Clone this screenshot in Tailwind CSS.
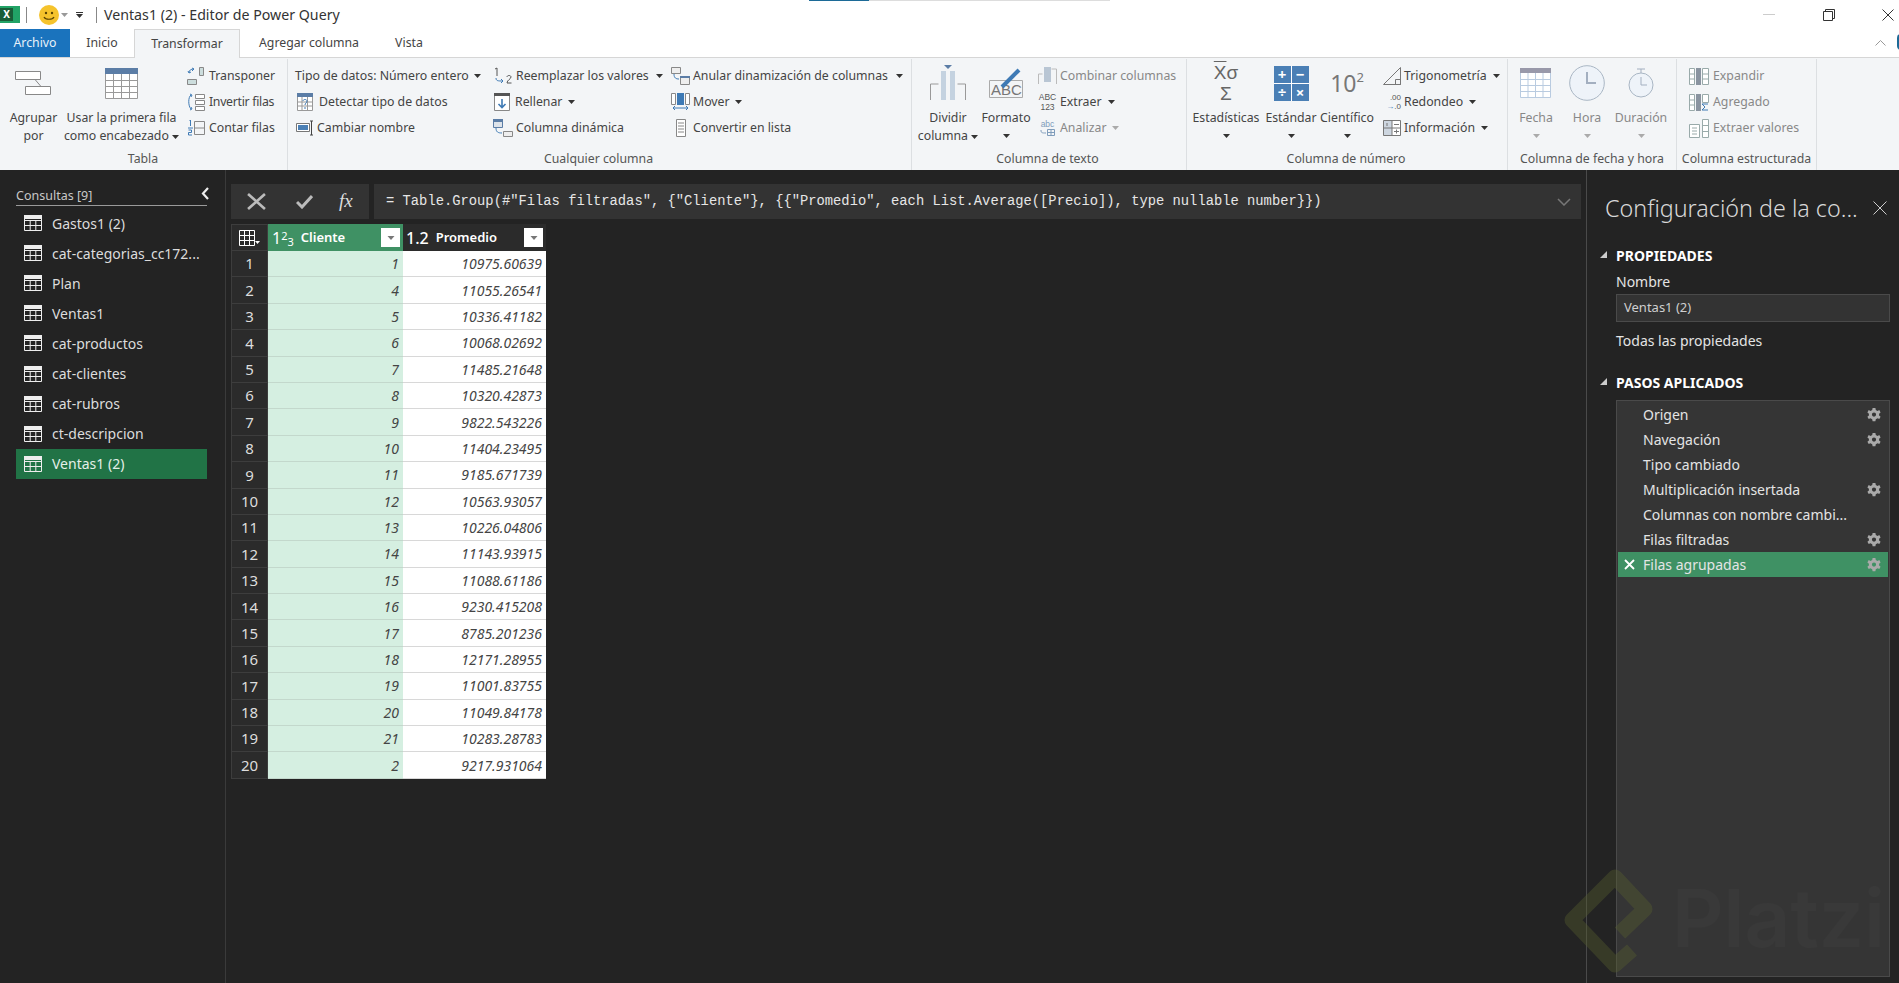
<!DOCTYPE html>
<html lang="es">
<head>
<meta charset="UTF-8">
<title>Ventas1 (2) - Editor de Power Query</title>
<script src="https://cdn.jsdelivr.net/npm/@tailwindcss/browser@4"></script>
</head>
<body class="relative w-[1899px] h-[983px] overflow-hidden bg-white font-['Noto_Sans',sans-serif] text-[12.3px] text-[#444]">
<svg class="hidden">
  <symbol id="tbl" viewBox="0 0 18 16"><path fill="none" stroke="currentColor" d="M.5.500h17v15H.5zM.5 5.500h17M.5 10.500h17M6.200 5.500v10M11.800 5.500v10"/><path fill="currentColor" d="M0 0h18v4H0z"/></symbol>
  <symbol id="gear" viewBox="0 0 14 14"><path fill="#aaa" fill-rule="evenodd" d="M5.600 0h2.800l.4 2 1.700.9 1.800-.8 1.300 2.400-1.500 1.300v1.600l1.500 1.300-1.300 2.400-1.800-.8-1.700.9-.4 2H5.600l-.4-2-1.700-.9-1.800.8L.4 8.700 1.900 7.400V5.800L.4 4.500l1.300-2.400 1.800.8 1.700-.9zM7 4.500a2 2 0 1 0 0 4.200 2 2 0 0 0 0-4.200z"/></symbol>
  <symbol id="car" viewBox="0 0 7 4"><path fill="currentColor" d="M0 0h7L3.500 4z"/></symbol>
</svg>

<!-- title bar -->
<header class="h-[29px] flex items-center relative">
  <div class="w-[20px] h-[17px] bg-[#21a366] flex items-center"><span class="w-[13px] h-[13px] bg-[#185c37] flex items-center justify-center text-white font-bold text-[10px]">X</span></div>
  <div class="w-px h-[16px] bg-[#888] ml-[6px]"></div>
  <svg class="ml-[12px] w-[20px] h-[20px]" viewBox="0 0 20 20"><circle cx="10" cy="10" r="10" fill="#f5c32c"/><circle cx="7" cy="8" r="1.200" fill="#5a4300"/><circle cx="13" cy="8" r="1.200" fill="#5a4300"/><path d="M5 12c1.500 3 8.500 3 10 0" fill="none" stroke="#5a4300" stroke-width="1.200"/></svg>
  <svg class="ml-[2px] w-[7px] h-[4px] text-[#999]"><use href="#car"/></svg>
  <div class="ml-[8px] flex flex-col items-center gap-[1px] text-[#333]"><span class="w-[7px] h-px bg-[#333]"></span><svg class="w-[7px] h-[4px]"><use href="#car"/></svg></div>
  <div class="w-px h-[16px] bg-[#888] ml-[13px]"></div>
  <h1 class="ml-[7px] text-[14.200px] font-normal text-[#333]">Ventas1 (2) - Editor de Power Query</h1>
  <div class="absolute left-[809px] top-0 w-[60px] h-[1px] bg-[#1c6a97]"></div>
  <div class="absolute left-[869px] top-0 w-[241px] h-[1px] bg-[#ddd]"></div>
  <div class="ml-auto flex items-center">
    <span class="w-[12px] h-px bg-[#ccc] mr-[48px]"></span>
    <svg class="w-[12px] h-[12px] mr-[47px]" viewBox="0 0 12 12"><path fill="none" stroke="#333" d="M.5 2.500h9v9h-9zM2.500 2.500v-2h9v9h-2"/></svg>
    <svg class="w-[12px] h-[12px] mr-[5px]" viewBox="0 0 12 12"><path stroke="#333" d="M.5.500l11 11M11.500.500l-11 11"/></svg>
  </div>
</header>

<!-- tabs -->
<nav class="h-[28px] flex items-stretch relative text-[12.300px]">
  <div class="w-[70px] bg-[#1a73bd] text-[#e8f1f9] flex items-center justify-center">Archivo</div>
  <div class="w-[64px] flex items-center justify-center">Inicio</div>
  <div class="w-[106px] border border-b-0 border-[#d6d6d6] bg-[#f3f5f7] flex items-center justify-center relative z-10 h-[29px]">Transformar</div>
  <div class="w-[138px] flex items-center justify-center">Agregar columna</div>
  <div class="w-[62px] flex items-center justify-center">Vista</div>
  <svg class="absolute left-[1875px] top-[11px] w-[11px] h-[6px]" viewBox="0 0 11 6"><path fill="none" stroke="#999" d="M.5 5.500l5-5 5 5"/></svg>
  <div class="absolute left-[1897px] top-[5px] w-[8px] h-[16px] rounded-full bg-[#1c6a97]"></div>
</nav>

<!-- ribbon -->
<section class="h-[113px] flex bg-[#f3f5f7] border-t border-[#d6d6d6]">

  <div class="w-[288px] h-full flex flex-col">
    <div class="h-[90px] pt-[4px] flex border-r border-[#dcdfe2] mt-[1px]">
      <div class="w-[60px] pl-[7px] flex flex-col items-center">
        <div class="h-[46px] flex items-center"><svg class="w-[38px] h-[26px] mt-[-4px]" viewBox="0 0 38 26"><path fill="#fff" stroke="#888" d="M.5.500h25v8H.5zM10.500 15.500h25v8h-25z"/><path stroke="#888" d="M20 8.500l6 7"/></svg></div>
        <span class="leading-[18px] text-center">Agrupar<br>por</span>
      </div>
      <div class="w-[123px] flex flex-col items-center">
        <div class="h-[46px] flex items-center"><svg class="w-[33px] h-[31px] mt-[-6px]" viewBox="0 0 33 31"><path fill="#fff" stroke="#999" d="M.5.500h32v30H.5zM.5 12.500h32M.5 18.500h32M.5 24.500h32M8.500 6v25M16.500 6v25M24.500 6v25"/><path fill="#5b7da6" d="M0 0h33v6H0z"/></svg></div>
        <span class="leading-[18px] text-center whitespace-nowrap">Usar la primera fila<br>como encabezado <svg class="inline w-[7px] h-[4px] align-middle text-[#333]"><use href="#car"/></svg></span>
      </div>
      <div class="pl-[4px]">
        <div class="h-[26px] flex items-center gap-[4px]"><svg class="w-[18px] h-[18px]" viewBox="0 0 18 18"><path fill="none" stroke="#3e7ab5" d="M2 6c0-3 2-4 5-4M5 1l2 1-2 2M1 4l1 2 2-1"/><path fill="#cdd" stroke="#888" d="M12.500.500h4v8h-4zM.5 12.500h9v5h-9z"/></svg><span>Transponer</span></div>
        <div class="h-[26px] flex items-center gap-[4px]"><svg class="w-[18px] h-[18px]" viewBox="0 0 18 18"><path fill="none" stroke="#3e7ab5" d="M4 2C1 4 1 13 4 16M3 1l2 1-1 2M3 17l2-1-1-2"/><path fill="#fff" stroke="#888" d="M8.500 1.500h9v4h-9zM8.500 7.500h9v4h-9zM8.500 13.500h9v4h-9z"/></svg><span class="tracking-[-0.3px]">Invertir filas</span></div>
        <div class="h-[26px] flex items-center gap-[4px]"><svg class="w-[18px] h-[18px]" viewBox="0 0 18 18"><path fill="none" stroke="#888" d="M7.500 2.500h10v13h-10zM7.500 9h10"/><path stroke="#3e7ab5" d="M1 9h5"/><path fill="none" stroke="#3e7ab5" d="M2.500 2l1-1v6M1.500 11h3v2.500h-3v2.500h3.500"/></svg><span>Contar filas</span></div>
      </div>
    </div>
    <div class="h-[22px] leading-[22px] text-center text-[#555] border-r border-[#dcdfe2] pr-[1px]">Tabla</div>
  </div>

  <div class="w-[624px] h-full flex flex-col">
    <div class="h-[90px] pt-[4px] mt-[1px] flex border-r border-[#dcdfe2]">
      <div class="w-[205px] pl-[7px]">
        <div class="h-[26px] flex items-center whitespace-nowrap">Tipo de datos: Número entero <svg class="ml-[5px] w-[7px] h-[4px] text-[#333]"><use href="#car"/></svg></div>
        <div class="h-[26px] flex items-center gap-[6px]"><svg class="ml-[2px] w-[16px] h-[18px]" viewBox="0 0 16 18"><path fill="#fff" stroke="#999" d="M.5.500h15v17H.5zM.5 9h15M.5 13h15M5 4v14M10.500 4v14"/><path fill="#5b7da6" d="M0 0h16v4H0z"/><path fill="none" stroke="#3e7ab5" d="M6 8c0-2 4-2 4 0s-2 2-2 4m0 2v2"/></svg><span>Detectar tipo de datos</span></div>
        <div class="h-[26px] flex items-center gap-[2px]"><svg class="ml-[1px] w-[19px] h-[16px]" viewBox="0 0 19 16"><path fill="#fff" stroke="#777" d="M.5 3.500h13v8H.5z"/><path fill="#4a7fb5" d="M2 5h10v5H2z"/><path stroke="#444" fill="none" d="M14 1h3m-1.500 0v14M14 15h3"/></svg><span>Cambiar nombre</span></div>
      </div>
      <div class="w-[178px]">
        <div class="h-[26px] flex items-center gap-[3px] whitespace-nowrap"><svg class="w-[20px] h-[18px]" viewBox="0 0 20 18"><path fill="none" stroke="#555" d="M2 2l2-1v8M14 10c0-2 4-2 4 0s-4 3-4 6h4.500"/><path fill="none" stroke="#3e7ab5" d="M3 11c0 3 2 3 7 3m-2-2l2 2-2 2"/></svg><span>Reemplazar los valores</span><svg class="ml-[4px] w-[7px] h-[4px] text-[#333]"><use href="#car"/></svg></div>
        <div class="h-[26px] flex items-center gap-[5px]"><svg class="ml-[1px] w-[16px] h-[18px]" viewBox="0 0 16 18"><path fill="#fff" stroke="#888" d="M.5.500h15v17H.5z"/><path fill="#555" d="M0 0h16v3H0z"/><path fill="none" stroke="#3e7ab5" stroke-width="1.600" d="M8 6v9M4.500 11L8 14.500 11.500 11"/></svg><span>Rellenar</span><svg class="ml-[1px] w-[7px] h-[4px] text-[#333]"><use href="#car"/></svg></div>
        <div class="h-[26px] flex items-center gap-[3px]"><svg class="w-[20px] h-[18px]" viewBox="0 0 20 18"><path fill="#dde3ea" stroke="#5b7da6" d="M.5.500h9v8h-9z"/><path fill="#5b7da6" d="M0 0h10v3H0z"/><path fill="#eee" stroke="#888" d="M10.500 12.500h9v5h-9z"/><path fill="none" stroke="#3e7ab5" d="M3 9c0 4 2 5 6 5"/></svg><span>Columna dinámica</span></div>
      </div>
      <div class="flex-1">
        <div class="h-[26px] flex items-center gap-[3px] whitespace-nowrap"><svg class="w-[19px] h-[18px]" viewBox="0 0 19 18"><path fill="#eee" stroke="#888" d="M.5.500h9v6h-9zM9.500 10.500h9v7h-9z"/><path fill="#5b7da6" d="M9 9h10v2H9z"/><path fill="none" stroke="#3e7ab5" d="M3 7c0 4 2 5 5 5"/></svg><span>Anular dinamización de columnas</span><svg class="ml-[5px] w-[7px] h-[4px] text-[#333]"><use href="#car"/></svg></div>
        <div class="h-[26px] flex items-center gap-[3px]"><svg class="w-[19px] h-[18px]" viewBox="0 0 19 18"><path fill="#fff" stroke="#888" d="M.5.500h4v11h-4zM14.500.500h4v11h-4z"/><path fill="#3e7ab5" d="M6 0h7v12H6z"/><path fill="none" stroke="#3e7ab5" d="M2 15h15M4 13l-2 2 2 2M15 13l2 2-2 2"/></svg><span>Mover</span><svg class="ml-[2px] w-[7px] h-[4px] text-[#333]"><use href="#car"/></svg></div>
        <div class="h-[26px] flex items-center gap-[7px]"><svg class="ml-[5px] w-[10px] h-[18px]" viewBox="0 0 10 18"><path fill="#fff" stroke="#888" d="M.5.500h9v17h-9zM2 4h6M2 7h6M2 10h6M2 13h6"/></svg><span>Convertir en lista</span></div>
      </div>
    </div>
    <div class="h-[22px] leading-[22px] text-center text-[#555] border-r border-[#dcdfe2] pr-[2px]">Cualquier columna</div>
  </div>

  <div class="w-[275px] h-full flex flex-col">
    <div class="h-[90px] pt-[4px] mt-[1px] flex border-r border-[#dcdfe2]">
      <div class="w-[72px] flex flex-col items-center">
        <div class="h-[46px] flex items-center"><svg class="w-[36px] h-[36px] mt-[-6px]" viewBox="0 0 36 36"><path fill="none" stroke="#999" d="M.5 35V19h8M35.500 35V19h-8"/><path fill="#c4d2e0" d="M11 6h5v29h-5zM20 6h5v29h-5z"/><path fill="#5b7da6" d="M14 0h8l-4 4z"/></svg></div>
        <span class="leading-[18px] text-center whitespace-nowrap">Dividir<br>columna <svg class="inline w-[7px] h-[4px] align-middle text-[#333]"><use href="#car"/></svg></span>
      </div>
      <div class="w-[44px] flex flex-col items-center">
        <div class="h-[46px] flex items-center"><svg class="w-[36px] h-[32px] mt-[-6px]" viewBox="0 0 36 32"><path fill="none" stroke="#aaa" d="M1.500 13.500h33v17h-33z"/><text x="3" y="28" font-size="15" fill="#777" font-family="Liberation Sans">ABC</text><path stroke="#3e7ab5" stroke-width="4" d="M14 20L31 3"/></svg></div>
        <span class="leading-[18px] text-center">Formato</span>
        <svg class="mt-[7px] w-[7px] h-[4px] text-[#333]"><use href="#car"/></svg>
      </div>
      <div class="flex-1 pl-[10px] whitespace-nowrap">
        <div class="h-[26px] flex items-center gap-[3px] text-[#888]"><svg class="w-[19px] h-[18px]" viewBox="0 0 19 18"><path fill="none" stroke="#bbb" d="M.5 17V7h4M18.500 17V2h-5"/><path fill="#b9c6d4" d="M6 0h7v15H6z"/></svg><span>Combinar columnas</span></div>
        <div class="h-[26px] flex items-center gap-[3px]"><span class="w-[19px] text-[8.500px] leading-[10px] text-[#555] text-center font-['Liberation_Sans']">ABC<br>123</span><span>Extraer</span><svg class="ml-[3px] w-[7px] h-[4px] text-[#333]"><use href="#car"/></svg></div>
        <div class="h-[26px] flex items-center gap-[3px] text-[#888]"><span class="w-[19px] flex flex-col items-center text-[8.500px] leading-[9px] text-[#7f9cbb] font-['Liberation_Sans']">abc<svg class="w-[15px] h-[7px]" viewBox="0 0 15 7"><path fill="none" stroke="#7f9cbb" d="M1 1c0 3 1 3 5 3M7.500.5h7v6h-7zM7.500 3.500h7M11 .5v6"/></svg></span><span>Analizar</span><svg class="ml-[3px] w-[7px] h-[4px] text-[#aaa]"><use href="#car"/></svg></div>
      </div>
    </div>
    <div class="h-[22px] leading-[22px] text-center text-[#555] border-r border-[#dcdfe2] pr-[3px]">Columna de texto</div>
  </div>

  <div class="w-[321px] h-full flex flex-col">
    <div class="h-[90px] pt-[4px] mt-[1px] flex border-r border-[#dcdfe2]">
      <div class="w-[78px] flex flex-col items-center">
        <div class="h-[46px] flex items-center"><span class="mt-[-6px] text-[19px] leading-[21px] text-center text-[#666] font-['Liberation_Sans']"><span class="overline">X</span>σ<br>Σ</span></div>
        <span class="leading-[18px] whitespace-nowrap">Estadísticas</span>
        <svg class="mt-[7px] w-[7px] h-[4px] text-[#333]"><use href="#car"/></svg>
      </div>
      <div class="w-[52px] flex flex-col items-center">
        <div class="h-[46px] flex items-center"><div class="mt-[-6px] w-[35px] h-[35px] grid grid-cols-2 gap-[1px] bg-white text-white text-[15px] leading-[17px] font-bold text-center"><span class="bg-[#4a7fb5]">+</span><span class="bg-[#4a7fb5]">−</span><span class="bg-[#4a7fb5]">÷</span><span class="bg-[#4a7fb5]">×</span></div></div>
        <span class="leading-[18px]">Estándar</span>
        <svg class="mt-[7px] w-[7px] h-[4px] text-[#333]"><use href="#car"/></svg>
      </div>
      <div class="w-[60px] flex flex-col items-center">
        <div class="h-[46px] flex items-center"><span class="mt-[-6px] text-[23px] text-[#777]">10<sup class="text-[13px] top-[-10px] relative">2</sup></span></div>
        <span class="leading-[18px]">Científico</span>
        <svg class="mt-[7px] w-[7px] h-[4px] text-[#333]"><use href="#car"/></svg>
      </div>
      <div class="flex-1 pl-[6px] whitespace-nowrap">
        <div class="h-[26px] flex items-center gap-[3px]"><svg class="w-[18px] h-[18px]" viewBox="0 0 18 18"><path fill="none" stroke="#777" d="M.5 17.500L17.500.5v17zM12.500 12.500h5v5h-5z"/></svg><span>Trigonometría</span><svg class="ml-[3px] w-[7px] h-[4px] text-[#333]"><use href="#car"/></svg></div>
        <div class="h-[26px] flex items-center gap-[3px]"><span class="w-[18px] text-[8px] leading-[9px] text-[#555] text-right whitespace-nowrap font-['Liberation_Sans']">.00<br><span class="text-[#3e7ab5]">→</span>.0</span><span>Redondeo</span><svg class="ml-[3px] w-[7px] h-[4px] text-[#333]"><use href="#car"/></svg></div>
        <div class="h-[26px] flex items-center gap-[3px]"><svg class="w-[18px] h-[18px]" viewBox="0 0 18 18"><path fill="#cdd6e0" stroke="#777" d="M.5 1.500h17v15H.5z"/><path fill="#fff" d="M9 2h8v14H9z"/><path stroke="#777" d="M9 1.500v15M.5 9h17M4 4v3M11 5.500h5M11 12.500h5M13.500 10.500v4"/></svg><span>Información</span><svg class="ml-[3px] w-[7px] h-[4px] text-[#333]"><use href="#car"/></svg></div>
      </div>
    </div>
    <div class="h-[22px] leading-[22px] text-center text-[#555] border-r border-[#dcdfe2] pr-[2px]">Columna de número</div>
  </div>

  <div class="w-[169px] h-full flex flex-col">
    <div class="h-[90px] pt-[4px] mt-[1px] flex border-r border-[#dcdfe2] text-[#888]">
      <div class="w-[56px] flex flex-col items-center">
        <div class="h-[46px] flex items-center"><svg class="w-[32px] h-[30px] mt-[-6px]" viewBox="0 0 32 30"><path fill="#fff" stroke="#b9cbe0" d="M.5.500h30v29H.5zM.5 11.500h30M.5 17.500h30M.5 23.500h30M8 5v25M15.500 5v25M23 5v25"/><path fill="#99a" d="M0 0h31v5H0z"/></svg></div>
        <span class="leading-[18px]">Fecha</span>
        <svg class="mt-[7px] w-[7px] h-[4px] text-[#aaa]"><use href="#car"/></svg>
      </div>
      <div class="w-[46px] flex flex-col items-center">
        <div class="h-[46px] flex items-center"><svg class="w-[36px] h-[36px] mt-[-6px]" viewBox="0 0 36 36"><circle cx="18" cy="18" r="17.300" fill="#eef3f9" stroke="#a9b6c4"/><path fill="none" stroke="#a3afc0" stroke-width="2" d="M18 7v11h9"/></svg></div>
        <span class="leading-[18px]">Hora</span>
        <svg class="mt-[7px] w-[7px] h-[4px] text-[#aaa]"><use href="#car"/></svg>
      </div>
      <div class="w-[62px] flex flex-col items-center">
        <div class="h-[46px] flex items-center"><svg class="w-[26px] h-[30px] mt-[-6px]" viewBox="0 0 26 30"><circle cx="13" cy="17" r="12" fill="#eef3f9" stroke="#a9b6c4"/><path fill="none" stroke="#a3afc0" d="M13 9v8h6M9 1h8M13 1v4"/></svg></div>
        <span class="leading-[18px]">Duración</span>
        <svg class="mt-[7px] w-[7px] h-[4px] text-[#aaa]"><use href="#car"/></svg>
      </div>
    </div>
    <div class="h-[22px] leading-[22px] text-center text-[#555] border-r border-[#dcdfe2]">Columna de fecha y hora</div>
  </div>

  <div class="w-[140px] h-full flex flex-col">
    <div class="h-[90px] pt-[4px] mt-[1px] pl-[12px] border-r border-[#dcdfe2] text-[#888] whitespace-nowrap">
      <div class="h-[26px] flex items-center gap-[4px]"><svg class="w-[20px] h-[17px]" viewBox="0 0 20 17"><path fill="#fff" stroke="#9aa" d="M.5.500h5v16h-5zM13.500.500h6v16h-6zM.5 6h5M.5 11h5M13.500 6h6M13.500 11h6"/><path fill="#8a94a0" d="M7 0h5v17H7z"/></svg><span>Expandir</span></div>
      <div class="h-[26px] flex items-center gap-[4px]"><svg class="w-[20px] h-[17px]" viewBox="0 0 20 17"><path fill="#fff" stroke="#9aa" d="M.5.500h5v16h-5zM13.500.500h6v8h-6zM.5 6h5M.5 11h5"/><path fill="#8a94a0" d="M7 0h5v17H7z"/><path fill="none" stroke="#3e7ab5" d="M19 10h-6l3 3-3 3h6"/></svg><span>Agregado</span></div>
      <div class="h-[26px] flex items-center gap-[4px]"><svg class="w-[20px] h-[19px]" viewBox="0 0 20 19"><path fill="#fff" stroke="#9aa" d="M.5 5.500h10v13H.5zM13.500.500h6v18h-6zM3 9h5M3 12h5M3 15h5M13.500 6.500h6M13.500 12.500h6"/></svg><span>Extraer valores</span></div>
    </div>
    <div class="h-[22px] leading-[22px] text-center text-[#555] border-r border-[#dcdfe2] whitespace-nowrap">Columna estructurada</div>
  </div>
  <div class="flex-1"></div>
</section>

<!-- main area -->
<main class="h-[813px] flex bg-[#232323]">
  <aside class="w-[226px] shrink-0 border-r border-[#3a3a3a] pl-[16px] pr-[18px] pt-[18px] text-[14px] text-[#dcdcdc]">
    <div class="flex items-center h-[18px] border-b border-[#9a9a9a] relative text-[12.500px] text-[#c8c8c8]">Consultas [9]
      <svg class="absolute right-[-2px] top-[-1px] w-[8px] h-[13px]" viewBox="0 0 8 13"><path fill="none" stroke="#eee" stroke-width="2.200" d="M7 1L2 6.500 7 12"/></svg>
    </div>
    <ul class="mt-[2px]">
      <li class="h-[30.100px] flex items-center pl-[8px] gap-[10px]"><svg class="w-[18px] h-[16px] text-[#eee]"><use href="#tbl"/></svg>Gastos1 (2)</li>
      <li class="h-[30.100px] flex items-center pl-[8px] gap-[10px]"><svg class="w-[18px] h-[16px] text-[#eee]"><use href="#tbl"/></svg>cat-categorias_cc172...</li>
      <li class="h-[30.100px] flex items-center pl-[8px] gap-[10px]"><svg class="w-[18px] h-[16px] text-[#eee]"><use href="#tbl"/></svg>Plan</li>
      <li class="h-[30.100px] flex items-center pl-[8px] gap-[10px]"><svg class="w-[18px] h-[16px] text-[#eee]"><use href="#tbl"/></svg>Ventas1</li>
      <li class="h-[30.100px] flex items-center pl-[8px] gap-[10px]"><svg class="w-[18px] h-[16px] text-[#eee]"><use href="#tbl"/></svg>cat-productos</li>
      <li class="h-[30.100px] flex items-center pl-[8px] gap-[10px]"><svg class="w-[18px] h-[16px] text-[#eee]"><use href="#tbl"/></svg>cat-clientes</li>
      <li class="h-[30.100px] flex items-center pl-[8px] gap-[10px]"><svg class="w-[18px] h-[16px] text-[#eee]"><use href="#tbl"/></svg>cat-rubros</li>
      <li class="h-[30.100px] flex items-center pl-[8px] gap-[10px]"><svg class="w-[18px] h-[16px] text-[#eee]"><use href="#tbl"/></svg>ct-descripcion</li>
      <li class="h-[30.100px] flex items-center pl-[8px] gap-[10px] bg-[#217346] text-[#e4efe8]"><svg class="w-[18px] h-[16px] text-[#eee]"><use href="#tbl"/></svg>Ventas1 (2)</li>
    </ul>
  </aside>

  <div class="flex-1 pl-[5px] pr-[5px] pt-[14px]">
    <div class="flex h-[35px] gap-[5px]">
      <div class="w-[138px] bg-[#333] flex items-center text-[#ccc]">
        <svg class="ml-[16px] w-[19px] h-[17px]" viewBox="0 0 18 16"><path stroke="#bbb" stroke-width="2.500" d="M1 1l16 14M17 1L1 15"/></svg>
        <svg class="ml-[30px] w-[17px] h-[14px]" viewBox="0 0 17 14"><path fill="none" stroke="#bbb" stroke-width="3" d="M1 7l5 5L16 1"/></svg>
        <span class="ml-[26px] text-[19px] italic font-['Liberation_Serif'] text-[#ddd]">fx</span>
      </div>
      <div class="flex-1 bg-[#333] flex items-center pl-[12px] pr-[10px] pt-[1px] font-['Liberation_Mono'] text-[13.800px] text-[#e6e6e6] whitespace-nowrap">
        <span>= Table.Group(#"Filas filtradas", {"Cliente"}, {{"Promedio", each List.Average([Precio]), type nullable number}})</span>
        <svg class="ml-auto w-[14px] h-[8px]" viewBox="0 0 14 8"><path fill="none" stroke="#777" stroke-width="1.500" d="M1 1l6 6 6-6"/></svg>
      </div>
    </div>

    <div class="mt-[5px] w-[315px] grid grid-cols-[37px_135px_143px] grid-rows-[27px_repeat(20,26.4px)] text-[14px] text-[#444] italic">
      <div class="bg-[#2b2b2b] border border-[#3d3d3d] flex items-center justify-center not-italic"><svg class="w-[21px] h-[16px] text-white" viewBox="0 0 21 16"><path fill="none" stroke="currentColor" d="M.5.500h15v15H.5zM.5 5.500h15M.5 10.500h15M5.500.5v15M10.500.5v15"/><path fill="currentColor" d="M16 11h5l-2.500 3z"/></svg></div>
      <div class="bg-[#3f9164] flex items-center not-italic text-white font-semibold text-[13px] pl-[4px]"><span class="font-normal text-[16px] mr-[7px]">1<sup class="text-[11px] -top-[4px] relative">2</sup><sub class="text-[11px] top-[2px] relative">3</sub></span>Cliente<span class="ml-auto mr-[3px] w-[19px] h-[19px] bg-white flex items-center justify-center"><svg class="w-[8px] h-[4px] text-[#777]"><use href="#car"/></svg></span></div>
      <div class="bg-[#2b2b2b] flex items-center not-italic text-white font-semibold text-[13px] pl-[3px]"><span class="font-medium text-[16px] mr-[7px]">1.2</span>Promedio<span class="ml-auto mr-[3px] w-[19px] h-[19px] bg-white flex items-center justify-center"><svg class="w-[8px] h-[4px] text-[#777]"><use href="#car"/></svg></span></div>

      <div class="bg-[#2b2b2b] border-b border-x border-[#3d3d3d] text-[15px] not-italic text-[#ddd] flex items-center justify-center">1</div><div class="bg-[#d5efe1] border-b border-[#c3d8cc] flex items-center justify-end pr-[4px]">1</div><div class="bg-white border-b border-[#d8d8d8] flex items-center justify-end pr-[4px]">10975.60639</div>
      <div class="bg-[#2b2b2b] border-b border-x border-[#3d3d3d] text-[15px] not-italic text-[#ddd] flex items-center justify-center">2</div><div class="bg-[#d5efe1] border-b border-[#c3d8cc] flex items-center justify-end pr-[4px]">4</div><div class="bg-white border-b border-[#d8d8d8] flex items-center justify-end pr-[4px]">11055.26541</div>
      <div class="bg-[#2b2b2b] border-b border-x border-[#3d3d3d] text-[15px] not-italic text-[#ddd] flex items-center justify-center">3</div><div class="bg-[#d5efe1] border-b border-[#c3d8cc] flex items-center justify-end pr-[4px]">5</div><div class="bg-white border-b border-[#d8d8d8] flex items-center justify-end pr-[4px]">10336.41182</div>
      <div class="bg-[#2b2b2b] border-b border-x border-[#3d3d3d] text-[15px] not-italic text-[#ddd] flex items-center justify-center">4</div><div class="bg-[#d5efe1] border-b border-[#c3d8cc] flex items-center justify-end pr-[4px]">6</div><div class="bg-white border-b border-[#d8d8d8] flex items-center justify-end pr-[4px]">10068.02692</div>
      <div class="bg-[#2b2b2b] border-b border-x border-[#3d3d3d] text-[15px] not-italic text-[#ddd] flex items-center justify-center">5</div><div class="bg-[#d5efe1] border-b border-[#c3d8cc] flex items-center justify-end pr-[4px]">7</div><div class="bg-white border-b border-[#d8d8d8] flex items-center justify-end pr-[4px]">11485.21648</div>
      <div class="bg-[#2b2b2b] border-b border-x border-[#3d3d3d] text-[15px] not-italic text-[#ddd] flex items-center justify-center">6</div><div class="bg-[#d5efe1] border-b border-[#c3d8cc] flex items-center justify-end pr-[4px]">8</div><div class="bg-white border-b border-[#d8d8d8] flex items-center justify-end pr-[4px]">10320.42873</div>
      <div class="bg-[#2b2b2b] border-b border-x border-[#3d3d3d] text-[15px] not-italic text-[#ddd] flex items-center justify-center">7</div><div class="bg-[#d5efe1] border-b border-[#c3d8cc] flex items-center justify-end pr-[4px]">9</div><div class="bg-white border-b border-[#d8d8d8] flex items-center justify-end pr-[4px]">9822.543226</div>
      <div class="bg-[#2b2b2b] border-b border-x border-[#3d3d3d] text-[15px] not-italic text-[#ddd] flex items-center justify-center">8</div><div class="bg-[#d5efe1] border-b border-[#c3d8cc] flex items-center justify-end pr-[4px]">10</div><div class="bg-white border-b border-[#d8d8d8] flex items-center justify-end pr-[4px]">11404.23495</div>
      <div class="bg-[#2b2b2b] border-b border-x border-[#3d3d3d] text-[15px] not-italic text-[#ddd] flex items-center justify-center">9</div><div class="bg-[#d5efe1] border-b border-[#c3d8cc] flex items-center justify-end pr-[4px]">11</div><div class="bg-white border-b border-[#d8d8d8] flex items-center justify-end pr-[4px]">9185.671739</div>
      <div class="bg-[#2b2b2b] border-b border-x border-[#3d3d3d] text-[15px] not-italic text-[#ddd] flex items-center justify-center">10</div><div class="bg-[#d5efe1] border-b border-[#c3d8cc] flex items-center justify-end pr-[4px]">12</div><div class="bg-white border-b border-[#d8d8d8] flex items-center justify-end pr-[4px]">10563.93057</div>
      <div class="bg-[#2b2b2b] border-b border-x border-[#3d3d3d] text-[15px] not-italic text-[#ddd] flex items-center justify-center">11</div><div class="bg-[#d5efe1] border-b border-[#c3d8cc] flex items-center justify-end pr-[4px]">13</div><div class="bg-white border-b border-[#d8d8d8] flex items-center justify-end pr-[4px]">10226.04806</div>
      <div class="bg-[#2b2b2b] border-b border-x border-[#3d3d3d] text-[15px] not-italic text-[#ddd] flex items-center justify-center">12</div><div class="bg-[#d5efe1] border-b border-[#c3d8cc] flex items-center justify-end pr-[4px]">14</div><div class="bg-white border-b border-[#d8d8d8] flex items-center justify-end pr-[4px]">11143.93915</div>
      <div class="bg-[#2b2b2b] border-b border-x border-[#3d3d3d] text-[15px] not-italic text-[#ddd] flex items-center justify-center">13</div><div class="bg-[#d5efe1] border-b border-[#c3d8cc] flex items-center justify-end pr-[4px]">15</div><div class="bg-white border-b border-[#d8d8d8] flex items-center justify-end pr-[4px]">11088.61186</div>
      <div class="bg-[#2b2b2b] border-b border-x border-[#3d3d3d] text-[15px] not-italic text-[#ddd] flex items-center justify-center">14</div><div class="bg-[#d5efe1] border-b border-[#c3d8cc] flex items-center justify-end pr-[4px]">16</div><div class="bg-white border-b border-[#d8d8d8] flex items-center justify-end pr-[4px]">9230.415208</div>
      <div class="bg-[#2b2b2b] border-b border-x border-[#3d3d3d] text-[15px] not-italic text-[#ddd] flex items-center justify-center">15</div><div class="bg-[#d5efe1] border-b border-[#c3d8cc] flex items-center justify-end pr-[4px]">17</div><div class="bg-white border-b border-[#d8d8d8] flex items-center justify-end pr-[4px]">8785.201236</div>
      <div class="bg-[#2b2b2b] border-b border-x border-[#3d3d3d] text-[15px] not-italic text-[#ddd] flex items-center justify-center">16</div><div class="bg-[#d5efe1] border-b border-[#c3d8cc] flex items-center justify-end pr-[4px]">18</div><div class="bg-white border-b border-[#d8d8d8] flex items-center justify-end pr-[4px]">12171.28955</div>
      <div class="bg-[#2b2b2b] border-b border-x border-[#3d3d3d] text-[15px] not-italic text-[#ddd] flex items-center justify-center">17</div><div class="bg-[#d5efe1] border-b border-[#c3d8cc] flex items-center justify-end pr-[4px]">19</div><div class="bg-white border-b border-[#d8d8d8] flex items-center justify-end pr-[4px]">11001.83755</div>
      <div class="bg-[#2b2b2b] border-b border-x border-[#3d3d3d] text-[15px] not-italic text-[#ddd] flex items-center justify-center">18</div><div class="bg-[#d5efe1] border-b border-[#c3d8cc] flex items-center justify-end pr-[4px]">20</div><div class="bg-white border-b border-[#d8d8d8] flex items-center justify-end pr-[4px]">11049.84178</div>
      <div class="bg-[#2b2b2b] border-b border-x border-[#3d3d3d] text-[15px] not-italic text-[#ddd] flex items-center justify-center">19</div><div class="bg-[#d5efe1] border-b border-[#c3d8cc] flex items-center justify-end pr-[4px]">21</div><div class="bg-white border-b border-[#d8d8d8] flex items-center justify-end pr-[4px]">10283.28783</div>
      <div class="bg-[#2b2b2b] border-b border-x border-[#3d3d3d] text-[15px] not-italic text-[#ddd] flex items-center justify-center">20</div><div class="bg-[#d5efe1] border-b border-[#c3d8cc] flex items-center justify-end pr-[4px]">2</div><div class="bg-white border-b border-[#d8d8d8] flex items-center justify-end pr-[4px]">9217.931064</div>
    </div>
  </div>

  <aside class="w-[313px] shrink-0 border-l border-[#4a4a4a] flex flex-col text-[14px] text-[#e4e4e4] pb-[6px]">
    <div class="h-[75px] pt-[21px] pl-[18px] flex items-start">
      <span class="text-[23.300px] leading-[34px] font-light text-[#d8d8d8] whitespace-nowrap">Configuración de la co...</span>
      <svg class="absolute left-[1873px] top-[201px] w-[14px] h-[14px]" viewBox="0 0 14 14"><path stroke="#ccc" d="M.5.500l13 13M13.500.500l-13 13"/></svg>
    </div>
    <div class="pl-[29px] h-[20px] flex items-center font-bold text-white relative text-[14px]"><svg class="absolute left-[13px] top-[6px] w-[7px] h-[7px]" viewBox="0 0 7 7"><path fill="#ccc" d="M7 0v7H0z"/></svg>PROPIEDADES</div>
    <div class="pl-[29px] h-[26px] flex items-center mt-[3px]">Nombre</div>
    <div class="ml-[29px] mr-[9px] h-[28px] bg-[#333] border border-[#4a4a4a] flex items-center pl-[7px] text-[13px] text-[#cfcfcf]">Ventas1 (2)</div>
    <div class="pl-[29px] h-[37px] flex items-center">Todas las propiedades</div>
    <div class="pl-[29px] h-[20px] mt-[13px] flex items-center font-bold text-white relative"><svg class="absolute left-[13px] top-[6px] w-[7px] h-[7px]" viewBox="0 0 7 7"><path fill="#ccc" d="M7 0v7H0z"/></svg>PASOS APLICADOS</div>
    <div class="ml-[29px] mr-[9px] mt-[8px] flex-1 bg-[#353535] border border-[#4a4a4a] pt-[1px] px-[1px]">
      <div class="h-[25px] flex items-center pl-[25px] pr-[7px]">Origen<svg class="ml-auto w-[14px] h-[14px]"><use href="#gear"/></svg></div>
      <div class="h-[25px] flex items-center pl-[25px] pr-[7px]">Navegación<svg class="ml-auto w-[14px] h-[14px]"><use href="#gear"/></svg></div>
      <div class="h-[25px] flex items-center pl-[25px] pr-[7px]">Tipo cambiado</div>
      <div class="h-[25px] flex items-center pl-[25px] pr-[7px]">Multiplicación insertada<svg class="ml-auto w-[14px] h-[14px]"><use href="#gear"/></svg></div>
      <div class="h-[25px] flex items-center pl-[25px] pr-[7px] whitespace-nowrap">Columnas con nombre cambi...</div>
      <div class="h-[25px] flex items-center pl-[25px] pr-[7px]">Filas filtradas<svg class="ml-auto w-[14px] h-[14px]"><use href="#gear"/></svg></div>
      <div class="h-[25px] flex items-center pl-[25px] pr-[7px] bg-[#3f9164] relative"><svg class="absolute left-[6px] top-[7px] w-[11px] h-[11px]" viewBox="0 0 11 11"><path stroke="#fff" stroke-width="1.800" d="M1 1l9 9M10 1l-9 9"/></svg>Filas agrupadas<svg class="ml-auto w-[14px] h-[14px]"><use href="#gear"/></svg></div>
    </div>
  </aside>
</main>

<!-- watermark -->
<svg class="absolute left-[1540px] top-[840px] w-[120px] h-[143px]" viewBox="0 0 120 143"><path fill="none" stroke="#5a6030" stroke-opacity=".38" stroke-width="15" stroke-linejoin="round" d="M80 93l25-24-30-32-43 43 43 45 17-15"/></svg>
<span class="absolute left-[1672px] top-[868px] text-[80px] leading-[100px] font-['Inter'] font-semibold text-white/[0.018]">Platzi</span>
</body>
</html>
